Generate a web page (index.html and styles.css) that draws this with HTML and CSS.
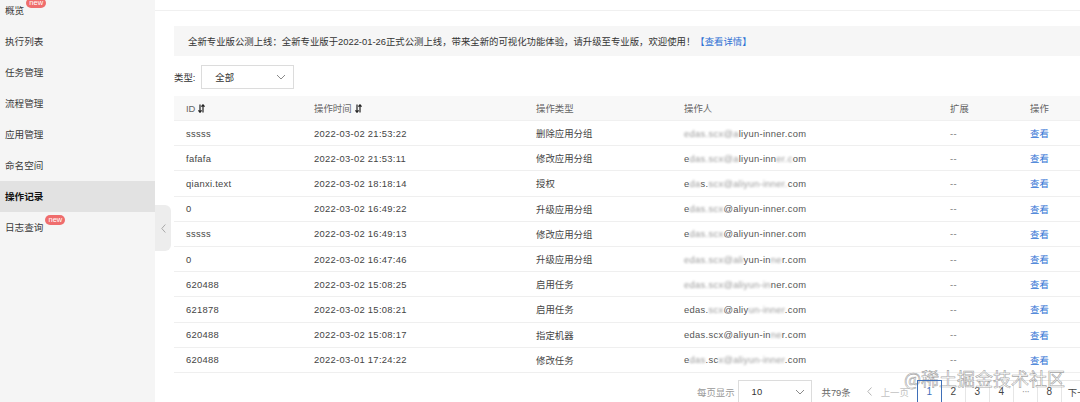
FILE: index.html
```html
<!DOCTYPE html>
<html lang="zh-CN">
<head>
<meta charset="utf-8">
<title>操作记录</title>
<link rel="stylesheet" href="styles.css">
</head>
<body>
<div class="app">
  <aside class="sidebar">
    <ul class="menu">
      <li class="menu-item"><span class="label">概览<span class="badge">new</span></span></li>
      <li class="menu-item"><span class="label">执行列表</span></li>
      <li class="menu-item"><span class="label">任务管理</span></li>
      <li class="menu-item"><span class="label">流程管理</span></li>
      <li class="menu-item"><span class="label">应用管理</span></li>
      <li class="menu-item"><span class="label">命名空间</span></li>
      <li class="menu-item active"><span class="label">操作记录</span></li>
      <li class="menu-item"><span class="label">日志查询<span class="badge">new</span></span></li>
    </ul>
  </aside>
  <main class="main">
    <div class="topbar"></div>
    <div class="content">
      <div class="notice">全新专业版公测上线：全新专业版于2022-01-26正式公测上线，带来全新的可视化功能体验，请升级至专业版，欢迎使用！<a class="link">【查看详情】</a></div>
      <div class="filter">
        <span class="filter-label">类型:</span>
        <div class="select select-type"><span>全部</span><svg class="chev" width="10" height="6" viewBox="0 0 10 6"><path d="M1 1 L5 5 L9 1" fill="none" stroke="#8a8a8a" stroke-width="1"/></svg></div>
      </div>
      <div class="table">
        <div class="row head">
          <div class="cell">ID <svg class="sort" width="7" height="9" viewBox="0 0 7 9"><path d="M2 0.5V8.3M0.4 6.4L2 8.3L3.6 6.4M5 8.5V0.8M3.4 2.6L5 0.8L6.6 2.6" fill="none" stroke="#222" stroke-width="1.2"/></svg></div>
          <div class="cell">操作时间 <svg class="sort" width="7" height="9" viewBox="0 0 7 9"><path d="M2 0.5V8.3M0.4 6.4L2 8.3L3.6 6.4M5 8.5V0.8M3.4 2.6L5 0.8L6.6 2.6" fill="none" stroke="#222" stroke-width="1.2"/></svg></div>
          <div class="cell">操作类型</div>
          <div class="cell">操作人</div>
          <div class="cell">扩展</div>
          <div class="cell">操作</div>
        </div>
        <div class="row">
          <div class="cell latin">sssss</div><div class="cell latin">2022-03-02 21:53:22</div><div class="cell">删除应用分组</div>
          <div class="cell latin email"><span class="blur">edas.scx@a</span>liyun-inner.com</div><div class="cell dash">--</div><div class="cell"><a class="link">查看</a></div>
        </div>
        <div class="row">
          <div class="cell latin">fafafa</div><div class="cell latin">2022-03-02 21:53:11</div><div class="cell">修改应用分组</div>
          <div class="cell latin email">e<span class="blur">das.scx@a</span>liyun-inn<span class="blur">er.c</span>om</div><div class="cell dash">--</div><div class="cell"><a class="link">查看</a></div>
        </div>
        <div class="row">
          <div class="cell latin">qianxi.text</div><div class="cell latin">2022-03-02 18:18:14</div><div class="cell">授权</div>
          <div class="cell latin email">e<span class="blur">da</span>s.<span class="blur">scx@aliyun-inner.</span>com</div><div class="cell dash">--</div><div class="cell"><a class="link">查看</a></div>
        </div>
        <div class="row">
          <div class="cell latin">0</div><div class="cell latin">2022-03-02 16:49:22</div><div class="cell">升级应用分组</div>
          <div class="cell latin email">e<span class="blur">das.scx</span>@aliyun-inner.com</div><div class="cell dash">--</div><div class="cell"><a class="link">查看</a></div>
        </div>
        <div class="row">
          <div class="cell latin">sssss</div><div class="cell latin">2022-03-02 16:49:13</div><div class="cell">修改应用分组</div>
          <div class="cell latin email">e<span class="blur">das.scx</span>@aliyun-inner.com</div><div class="cell dash">--</div><div class="cell"><a class="link">查看</a></div>
        </div>
        <div class="row">
          <div class="cell latin">0</div><div class="cell latin">2022-03-02 16:47:46</div><div class="cell">升级应用分组</div>
          <div class="cell latin email"><span class="blur">edas.scx@ali</span>yun-in<span class="blur">ne</span>r.com</div><div class="cell dash">--</div><div class="cell"><a class="link">查看</a></div>
        </div>
        <div class="row">
          <div class="cell latin">620488</div><div class="cell latin">2022-03-02 15:08:25</div><div class="cell">启用任务</div>
          <div class="cell latin email"><span class="blur">edas.scx@aliyun-in</span>ner.com</div><div class="cell dash">--</div><div class="cell"><a class="link">查看</a></div>
        </div>
        <div class="row">
          <div class="cell latin">621878</div><div class="cell latin">2022-03-02 15:08:21</div><div class="cell">启用任务</div>
          <div class="cell latin email">edas.<span class="blur">scx</span>@aliy<span class="blur">un-inner</span>.com</div><div class="cell dash">--</div><div class="cell"><a class="link">查看</a></div>
        </div>
        <div class="row">
          <div class="cell latin">620488</div><div class="cell latin">2022-03-02 15:08:17</div><div class="cell">指定机器</div>
          <div class="cell latin email">edas.scx@aliyun-in<span class="blur">ne</span>r.com</div><div class="cell dash">--</div><div class="cell"><a class="link">查看</a></div>
        </div>
        <div class="row">
          <div class="cell latin">620488</div><div class="cell latin">2022-03-01 17:24:22</div><div class="cell">修改任务</div>
          <div class="cell latin email">e<span class="blur">das</span>.sc<span class="blur">x@aliyun-inner</span>.com</div><div class="cell dash">--</div><div class="cell"><a class="link">查看</a></div>
        </div>
      </div>
      <div class="pager">
        <span class="pager-label">每页显示</span>
        <div class="select select-size"><span class="latin">10</span><svg class="chev" width="10" height="6" viewBox="0 0 10 6"><path d="M1 1 L5 5 L9 1" fill="none" stroke="#8a8a8a" stroke-width="1"/></svg></div>
        <span class="pager-total">共79条</span>
        <span class="pager-prev"><svg width="5" height="9" viewBox="0 0 5 9"><path d="M4.5 0.5 L0.8 4.5 L4.5 8.5" fill="none" stroke="#b5b5b5" stroke-width="1"/></svg>上一页</span>
        <ul class="pages">
          <li class="page current">1</li>
          <li class="page">2</li>
          <li class="page">3</li>
          <li class="page">4</li>
          <li class="page more">···</li>
          <li class="page">8</li>
          <li class="page next">下一页</li>
        </ul>
      </div>
    </div>
    <div class="collapse-tab"><svg width="5" height="9" viewBox="0 0 5 9"><path d="M4.3 0.5 L0.8 4.5 L4.3 8.5" fill="none" stroke="#a8a8a8" stroke-width="1"/></svg></div>
  </main>
  <div class="watermark">@稀土掘金技术社区</div>
</div>
</body>
</html>
```
FILE: styles.css
```css
* { box-sizing: border-box; }
html, body { margin: 0; padding: 0; }
body {
  width: 1080px;
  height: 402px;
  overflow: hidden;
  background: #fff;
  font-family: "Liberation Sans", "Noto Sans CJK SC", sans-serif;
  font-size: 9.4px;
  color: #333;
}
ul { list-style: none; margin: 0; padding: 0; }
a.link { color: #2f72d4; text-decoration: none; cursor: pointer; }

.app {
  position: relative;
  display: flex;
  width: 1080px;
  height: 402px;
  overflow: hidden;
}

/* sidebar */
.sidebar {
  width: 155px;
  flex-shrink: 0;
  background: #f5f5f5;
  height: 100%;
}
.menu { margin-top: -5px; }
.menu-item {
  height: 31px;
  display: flex;
  align-items: center;
  padding-left: 5px;
  font-size: 9.6px;
  color: #3a3a3a;
}
.menu-item.active {
  background: #e2e2e2;
  color: #111;
  font-weight: 700;
}
.label { position: relative; line-height: 13px; }
.badge {
  position: absolute;
  left: calc(100% + 2px);
  top: -6px;
  width: 20px;
  height: 10px;
  border-radius: 6px;
  background: #ef6d6d;
  color: #fff;
  font-size: 7.5px;
  line-height: 10px;
  text-align: center;
  font-weight: 400;
}

/* main */
.main {
  position: relative;
  flex: 1;
  min-width: 0;
  height: 100%;
}
.topbar {
  height: 11px;
  border-bottom: 1px solid #f0f0f0;
}
.content {
  padding-left: 19px;
  width: 960px;
}
.notice {
  margin-top: 15px;
  height: 30px;
  background: #f6f6f6;
  padding-left: 14px;
  display: flex;
  align-items: center;
  color: #333;
  white-space: nowrap;
}

.filter {
  margin-top: 9px;
  height: 24px;
  display: flex;
  align-items: center;
  gap: 6px;
}
.filter-label { color: #333; }
.select {
  height: 24px;
  border: 1px solid #dcdcdc;
  display: flex;
  align-items: center;
  justify-content: space-between;
  background: #fff;
  color: #333;
}
.select-type { width: 93px; padding: 0 7px 0 13px; }
.chev { display: block; }

/* table */
.table { margin-top: 7px; }
.row {
  display: grid;
  grid-template-columns: 128px 222px 148px 266px 80px 1fr;
  height: 25.2px;
  border-bottom: 1px solid #efefef;
  align-items: center;
  color: #444;
}
.row.head {
  height: 25px;
  background: #f8f8f8;
  color: #666;
  border-bottom: 1px solid #f0f0f0;
}
.cell {
  padding-left: 12px;
  white-space: nowrap;
  display: flex;
  align-items: center;
}
.head .cell { gap: 3px; }
.sort { display: block; }
.latin { letter-spacing: 0.3px; }
.email { color: #555; display: block; }
.blur {
  filter: blur(1.3px);
  color: #9a9a9a;
}
.dash { color: #777; letter-spacing: 0.5px; }

/* pager */
.pager {
  margin-top: 7px;
  height: 24px;
  display: flex;
  align-items: center;
  padding-left: 523px;
  white-space: nowrap;
}
.pager-label { color: #999; margin-right: 3px; }
.select-size { width: 74px; padding: 0 6px 0 13px; }
.pager-total { color: #666; margin-left: 10px; }
.pager-prev {
  margin-left: 16px;
  color: #c2c2c2;
  display: flex;
  align-items: center;
  gap: 9px;
}
.pages { display: flex; margin-left: 9px; }
.page {
  width: 25px;
  height: 24px;
  border: 1px solid #e6e6e6;
  margin-left: -1px;
  display: flex;
  align-items: center;
  justify-content: center;
  color: #444;
  font-size: 10px;
}
.page.current {
  border-color: #3f6fb8;
  color: #3f6fb8;
  position: relative;
  z-index: 1;
}
.page.more { color: #999; letter-spacing: -1px; }
.page.next { width: 44px; justify-content: flex-start; padding-left: 6px; font-size: 9.4px; }

/* collapse handle (overlay) */
.collapse-tab {
  position: absolute;
  left: 0;
  top: 205px;
  width: 16px;
  height: 46px;
  background: #ededed;
  border-radius: 0 6px 6px 0;
  display: flex;
  align-items: center;
  justify-content: center;
}

/* watermark (overlay) */
.watermark {
  position: absolute;
  left: 904px;
  top: 365px;
  font-family: "Noto Sans CJK SC", sans-serif;
  font-size: 18px;
  line-height: 26px;
  color: rgba(255, 255, 255, 0.85);
  -webkit-text-stroke: 0.6px rgba(110, 110, 110, 0.65);
  white-space: nowrap;
  pointer-events: none;
}
```
